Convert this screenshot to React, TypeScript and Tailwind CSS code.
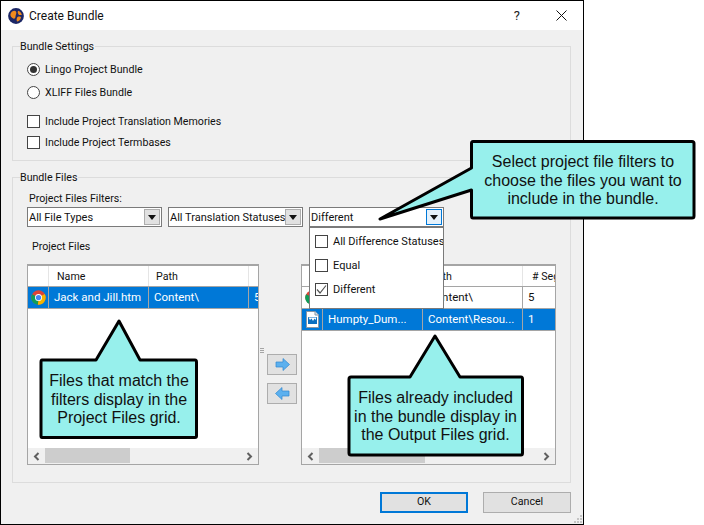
import React from "react";

const UI = "font-['Roboto',sans-serif] text-[10.65px] leading-none text-[#111]";
const LBL = "pt-[2px]";

function Radio({ checked, label, className = "" }: { checked?: boolean; label: string; className?: string }) {
  return (
    <div className={`flex items-center h-[14px] ${className}`}>
      <span className="w-[13px] h-[13px] rounded-full border border-[#444] bg-white flex items-center justify-center">
        {checked && <span className="w-[7px] h-[7px] rounded-full bg-[#333]" />}
      </span>
      <span className={`ml-[5px] ${LBL}`}>{label}</span>
    </div>
  );
}

function Check({ checked, label, className = "", labelClass = LBL }: { checked?: boolean; label: string; className?: string; labelClass?: string }) {
  return (
    <div className={`flex items-center h-[14px] ${className}`}>
      <span className="w-[13px] h-[13px] border border-[#444] bg-white flex items-center justify-center shrink-0">
        {checked && (
          <svg width="11" height="11" viewBox="0 0 11 11">
            <path d="M1 5.5 L4 9 L10 1.5" fill="none" stroke="#555" strokeWidth="1.2" />
          </svg>
        )}
      </span>
      <span className={`ml-[5px] whitespace-nowrap ${labelClass}`}>{label}</span>
    </div>
  );
}

function Combo({ label, width, className = "", active }: { label: string; width: string; className?: string; active?: boolean }) {
  return (
    <div className={`${width} h-[20px] bg-white border border-[#7a7a7a] flex items-center justify-between pl-[1px] pr-[1px] ${className}`}>
      <span className="whitespace-nowrap text-[11px]">{label}</span>
      <span className={`w-[16px] h-[16px] flex items-center justify-center shrink-0 border ${active ? "bg-[#e5f1fb] border-[#0078d7]" : "bg-[#e1e1e1] border-[#adadad]"}`}>
        <svg width="8" height="5" viewBox="0 0 8 5"><path d="M0 0H8L4 5Z" fill="#111" /></svg>
      </span>
    </div>
  );
}

function Chrome() {
  return (
    <svg width="15" height="15" viewBox="0 0 24 24">
      <circle cx="12" cy="12" r="11.5" fill="#db4437" />
      <path d="M12 12 L22 6.5 A11.5 11.5 0 0 1 11 23.5 Z" fill="#f4b400" />
      <path d="M12 12 L11 23.5 A11.5 11.5 0 0 1 1.7 6.6 Z" fill="#0f9d58" />
      <circle cx="12" cy="12" r="5.6" fill="#fff" />
      <circle cx="12" cy="12" r="4.2" fill="#4285f4" />
    </svg>
  );
}

function FileIcon() {
  return (
    <svg width="13" height="17" viewBox="0 0 13 17">
      <path d="M.5.5H9L12.5 4V16.5H.5Z" fill="#fff" stroke="#8a96a3" strokeWidth="1" />
      <path d="M9 .5V4H12.5" fill="#dfe6ee" stroke="#8a96a3" strokeWidth="1" />
      <rect x="2" y="6" width="9" height="7" fill="#0b6fc0" />
      <path d="M2.5 6.5H10.5L9.5 9L8.5 7.5L7 10L5.5 7.5L4 9Z" fill="#fff" />
    </svg>
  );
}

function Logo() {
  return (
    <svg width="16" height="16" viewBox="0 0 16 16">
      <circle cx="8" cy="8" r="7.9" fill="#1c2766" />
      <path d="M2.5 6C3.5 3 6.5 2 8 3.5C9 5.5 7.5 6.5 7.5 8.5C7.5 10.5 6 11.5 4.5 10C3 9 2 7.5 2.5 6Z" fill="#f08a1d" />
      <path d="M10 2.8C12 3.3 13.4 5 13.8 7L11 7C9.8 6 9.4 4 10 2.8Z" fill="#f08a1d" />
      <path d="M9.5 9C11 8.3 12.8 8.5 13 9.5C12.5 12 10.5 13.5 9 13.5C8.4 12 8.5 10 9.5 9Z" fill="#f08a1d" />
    </svg>
  );
}

function Scrollbar({ thumbLeft, thumbWidth }: { thumbLeft: string; thumbWidth: string }) {
  return (
    <div className="h-[16px] bg-[#f0f0f0] flex items-center justify-between shrink-0 relative">
      <svg className="ml-[5px]" width="7" height="9" viewBox="0 0 7 9"><path d="M5.5 1L2 4.5L5.5 8" stroke="#606060" strokeWidth="2" fill="none" /></svg>
      <span className={`absolute top-0 h-[15px] bg-[#cdcdcd] ${thumbLeft} ${thumbWidth}`} />
      <svg className="mr-[5px]" width="7" height="9" viewBox="0 0 7 9"><path d="M1.5 1L5 4.5L1.5 8" stroke="#606060" strokeWidth="2" fill="none" /></svg>
    </div>
  );
}

type Row = { icon: React.ReactNode; name: string; path: string; seg: string; selected?: boolean };

function Grid({ width, lastHeader, rows, thumbLeft, thumbWidth, className = "" }: { width: string; lastHeader: string; rows: Row[]; thumbLeft: string; thumbWidth: string; className?: string }) {
  return (
    <div className={`${width} h-[201px] border border-t-2 border-[#a5a5a5] bg-white flex flex-col ${className}`}>
      <div className="flex h-[21px] border-b border-[#a5a5a5] shrink-0 overflow-hidden">
        <div className="w-[21px] border-r border-[#e5e5e5] shrink-0" />
        <div className="w-[100px] border-r border-[#e5e5e5] shrink-0 flex items-center pl-[8px] pt-[2px]">Name</div>
        <div className="w-[100px] border-r border-[#e5e5e5] shrink-0 flex items-center pl-[7px] pt-[2px]">Path</div>
        <div className="flex-1 min-w-0 flex items-center pl-[9px] pt-[2px] whitespace-nowrap">{lastHeader}</div>
      </div>
      {rows.map((r) => (
        <div key={r.name} className={`flex h-[22px] border-b border-[#a5a5a5] shrink-0 overflow-hidden ${r.selected ? "bg-[#0078d7] text-white" : "bg-white"}`}>
          <div className="w-[21px] border-r border-[#a5a5a5] shrink-0 flex items-center justify-center">{r.icon}</div>
          <div className="w-[100px] border-r border-[#a5a5a5] shrink-0 flex items-center pl-[5px] text-[11.5px] whitespace-nowrap">{r.name}</div>
          <div className="w-[100px] border-r border-[#a5a5a5] shrink-0 flex items-center pl-[5px] text-[11.5px] whitespace-nowrap">{r.path}</div>
          <div className="flex-1 flex items-center pl-[5px] text-[11.5px]">{r.seg}</div>
        </div>
      ))}
      <div className="flex-1" />
      <Scrollbar thumbLeft={thumbLeft} thumbWidth={thumbWidth} />
    </div>
  );
}

function ArrowBtn({ dir, className = "" }: { dir: "r" | "l"; className?: string }) {
  return (
    <div className={`w-[30px] h-[21px] bg-[#e1e1e1] border border-[#adadad] flex items-center justify-center ${className}`}>
      <svg width="15" height="13" viewBox="0 0 15 13">
        <path
          d={dir === "r" ? "M1 4H8V.5L14.5 6.5L8 12.5V9H1Z" : "M14 4H7V.5L.5 6.5L7 12.5V9H14Z"}
          fill="#5cb0ee"
          stroke="#2f86d0"
          strokeWidth="0.7"
        />
      </svg>
    </div>
  );
}

const CALLOUT = "font-['Liberation_Sans',sans-serif] text-[16px] leading-[18.5px] text-[#111] text-center";

export default function App() {
  return (
    <div className={`w-[704px] h-[525px] bg-white relative overflow-hidden ${UI}`}>
      <div className="w-[584px] h-[525px] border border-black bg-[#f0f0f0] flex flex-col">
        {/* title bar */}
        <div className="h-[29px] bg-white flex items-center shrink-0 pl-[7px] pr-[14px]">
          <Logo />
          <span className="ml-[5px] text-[12px]">Create Bundle</span>
          <span className="ml-auto mr-[36px] text-[13px] text-[#222]">?</span>
          <svg width="11" height="11" viewBox="0 0 11 11" className="mr-[2px]"><path d="M.5.5L10.5 10.5M10.5.5L.5 10.5" stroke="#111" strokeWidth="1" /></svg>
        </div>

        <div className="flex-1 pl-[11px] pt-[16px] flex flex-col">
          {/* Bundle Settings */}
          <div className="w-[559px] h-[115px] border border-[#dcdcdc] shrink-0 pl-[14px]">
            <div className="-mt-[6px] -ml-[7px] w-fit bg-[#f0f0f0] pr-[1px] h-[11px] flex items-center pt-[2px]">Bundle Settings</div>
            <Radio checked label="Lingo Project Bundle" className="mt-[10px]" />
            <Radio label="XLIFF Files Bundle" className="mt-[9px]" />
            <Check label="Include Project Translation Memories" className="mt-[15px]" />
            <Check label="Include Project Termbases" className="mt-[7px]" />
          </div>

          {/* Bundle Files */}
          <div className="w-[559px] h-[306px] border border-[#dcdcdc] shrink-0 mt-[16px] pl-[14px]">
            <div className="-mt-[6px] -ml-[7px] w-fit bg-[#f0f0f0] pr-[1px] h-[11px] flex items-center pt-[2px]">Bundle Files</div>
            <div className="ml-[2px] mt-[9px] h-[12px] flex items-center pt-[2px]">Project Files Filters:</div>
            <div className="flex mt-[3px]">
              <Combo label="All File Types" width="w-[135px]" />
              <Combo label="All Translation Statuses" width="w-[135px]" className="ml-[6px]" />
              <Combo label="Different" width="w-[135px]" className="ml-[6px]" active />
            </div>
            <div className="ml-[5px] mt-[13px] h-[12px] flex items-center pt-[2px]">Project Files</div>
            <div className="flex mt-[12px]">
              <Grid
                width="w-[232px]"
                lastHeader=""
                thumbLeft="left-[17px]"
                thumbWidth="w-[85px]"
                rows={[{ icon: <Chrome />, name: "Jack and Jill.htm", path: "Content\\", seg: "5", selected: true }]}
              />
              <div className="w-[42px] shrink-0 relative">
                <div className="ml-[1px] mt-[84px] w-[4px] h-[5px] border-y border-[#a5a5a5] flex items-center"><span className="w-full h-px bg-[#a5a5a5]" /></div>
                <ArrowBtn dir="r" className="ml-[8px] mt-[1px]" />
                <ArrowBtn dir="l" className="ml-[8px] mt-[8px]" />
              </div>
              <Grid
                width="w-[255px]"
                lastHeader="# Seg"
                thumbLeft="left-[17px]"
                thumbWidth="w-[106px]"
                rows={[
                  { icon: <Chrome />, name: "Jack and Jill.htm", path: "Content\\", seg: "5" },
                  { icon: <FileIcon />, name: "Humpty_Dum...", path: "Content\\Resou...", seg: "1", selected: true },
                ]}
              />
            </div>
          </div>

          {/* buttons */}
          <div className="flex mt-[9px] ml-[368px]">
            <button className="w-[88px] h-[21px] bg-[#e1e1e1] border-2 border-[#0078d7]">OK</button>
            <button className="w-[88px] h-[21px] bg-[#e1e1e1] border border-[#adadad] ml-[15px]">Cancel</button>
          </div>
        </div>
      </div>

      {/* resize grip */}
      <svg className="absolute left-[573px] top-[514px]" width="10" height="10" viewBox="0 0 10 10">
        <path d="M7 1h2v2H7zM4 4h2v2H4zM7 4h2v2H7zM1 7h2v2H1zM4 7h2v2H4zM7 7h2v2H7z" fill="#c4c4c4" />
      </svg>

      {/* dropdown list */}
      <div className="absolute left-[309px] top-[227px] w-[135px] h-[82px] bg-white border border-[#7a7a7a] pl-[5px] pt-[6px] overflow-hidden text-[11px]">
        <Check label="All Difference Statuses" labelClass="" />
        <Check label="Equal" labelClass="" className="mt-[10px]" />
        <Check checked label="Different" labelClass="" className="mt-[10px]" />
      </div>

      {/* callouts */}
      <svg className="absolute left-0 top-0 pointer-events-none" width="704" height="525" viewBox="0 0 704 525">
        <g fill="#97f0ec" stroke="#000" strokeWidth="3" strokeLinejoin="round">
          <path d="M473 141.5H692Q694 141.5 694 143.5V216Q694 218 692 218H473Q471.5 218 471.5 216V190L380 219L471.5 168V143.5Q471.5 141.5 473 141.5Z" />
          <path d="M42 360H96L119 321L140 360H195Q196.5 360 196.5 362V436Q196.5 437.5 195 437.5H42Q41 437.5 41 436V362Q41 360 42 360Z" />
          <path d="M351 377H410L435 336L460 377H521Q522.5 377 522.5 379V453Q522.5 455 521 455H351Q349 455 349 453V379Q349 377 351 377Z" />
        </g>
      </svg>
      <div className={`absolute left-[471px] top-[153px] w-[224px] ${CALLOUT}`}>
        Select project file filters to<br />choose the files you want to<br />include in the bundle.
      </div>
      <div className={`absolute left-[40px] top-[372px] w-[158px] ${CALLOUT}`}>
        Files that match the<br />filters display in the<br />Project Files grid.
      </div>
      <div className={`absolute left-[348px] top-[389px] w-[175px] ${CALLOUT}`}>
        Files already included<br />in the bundle display in<br />the Output Files grid.
      </div>
    </div>
  );
}
